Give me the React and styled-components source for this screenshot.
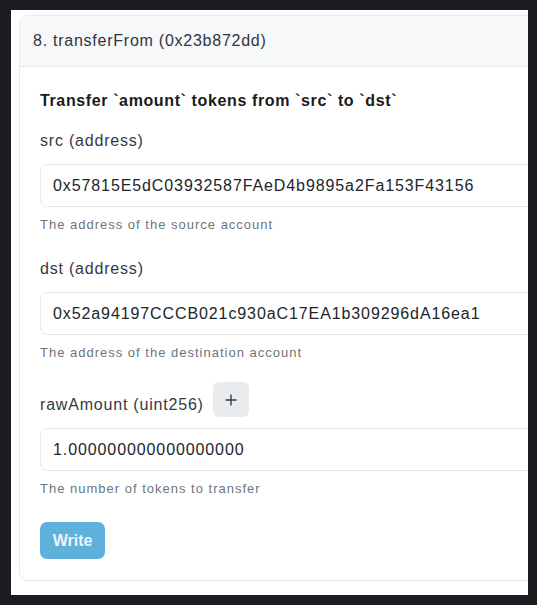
import React from 'react'
import styled, { createGlobalStyle } from 'styled-components'

const GlobalStyle = createGlobalStyle`
  html, body {
    margin: 0;
    padding: 0;
    background: #1b1c20;
  }
  body {
    font-family: "Liberation Sans", Arial, sans-serif;
  }
`

const Page = styled.div`
  width: 537px;
  height: 605px;
  padding: 10px 9px 10px 11px;
  box-sizing: border-box;
  background: #1b1c20;
`

const Panel = styled.div`
  height: 100%;
  background: #ffffff;
  overflow: hidden;
  padding: 5px 0 0 8px;
  box-sizing: border-box;
`

const Card = styled.div`
  width: 560px;
  border: 1px solid #e6e9ee;
  border-radius: 9px;
  overflow: hidden;
  background: #fff;
`

const Header = styled.div`
  height: 50px;
  display: flex;
  align-items: center;
  padding: 0 13px;
  background: #f7f8fa;
  border-bottom: 1px solid #e6e9ee;
  font-size: 16px;
  letter-spacing: 0.75px;
  color: #2f3640;
`

const Body = styled.div`
  padding: 22px 20px 21px 20px;
  display: flex;
  flex-direction: column;
  align-items: flex-start;
`

const Title = styled.div`
  font-size: 16px;
  line-height: 24px;
  font-weight: bold;
  letter-spacing: 0.62px;
  color: #1a1a1a;
  margin-bottom: 16px;
`

const LabelRow = styled.div`
  display: flex;
  align-items: flex-end;
  gap: 9px;
  margin-top: ${p => p.$top || 0}px;
`

const Label = styled.label`
  font-size: 16px;
  line-height: 24px;
  letter-spacing: 0.8px;
  color: #343a40;
`

const PlusButton = styled.button`
  width: 36px;
  height: 35px;
  border: none;
  border-radius: 6px;
  background: #e9ecef;
  display: flex;
  align-items: center;
  justify-content: center;
  padding: 0;
`

const Input = styled.input`
  width: 520px;
  height: 43px;
  box-sizing: border-box;
  margin-top: 11px;
  padding: 0 12px;
  border: 1px solid #e6e9ee;
  border-radius: 7px;
  font-family: "Liberation Sans", Arial, sans-serif;
  font-size: 16px;
  letter-spacing: 0.9px;
  color: #212529;
  background: #fff;
  outline: none;
`

const Help = styled.div`
  margin-top: 8px;
  font-size: 13px;
  line-height: 20px;
  letter-spacing: 1px;
  color: #6c757d;
`

const WriteButton = styled.button`
  margin-top: 23px;
  width: 65px;
  height: 37px;
  border: none;
  border-radius: 7px;
  background: #5fb0da;
  color: rgba(255, 255, 255, 0.9);
  font-family: "Liberation Sans", Arial, sans-serif;
  font-size: 16px;
  font-weight: bold;
  padding: 0;
`

const fields = [
  {
    name: 'src (address)',
    value: '0x57815E5dC03932587FAeD4b9895a2Fa153F43156',
    help: 'The address of the source account',
  },
  {
    name: 'dst (address)',
    value: '0x52a94197CCCB021c930aC17EA1b309296dA16ea1',
    help: 'The address of the destination account',
  },
  {
    name: 'rawAmount (uint256)',
    value: '1.000000000000000000',
    help: 'The number of tokens to transfer',
    plus: true,
  },
]

const PlusIcon = () => (
  <svg width="12" height="12" viewBox="0 0 12 12">
    <path d="M6 0.5v11M0.5 6h11" stroke="#343a40" strokeWidth="1.4" fill="none" />
  </svg>
)

const App = () => {
  return (
    <>
      <GlobalStyle />
      <Page>
        <Panel>
          <Card>
            <Header>8. transferFrom (0x23b872dd)</Header>
            <Body>
              <Title>Transfer `amount` tokens from `src` to `dst`</Title>
              {fields.map((f, i) => (
                <React.Fragment key={f.name}>
                  <LabelRow $top={i === 0 ? 0 : f.plus ? 19 : 22}>
                    <Label>{f.name}</Label>
                    {f.plus && (
                      <PlusButton>
                        <PlusIcon />
                      </PlusButton>
                    )}
                  </LabelRow>
                  <Input defaultValue={f.value} readOnly />
                  <Help>{f.help}</Help>
                </React.Fragment>
              ))}
              <WriteButton>Write</WriteButton>
            </Body>
          </Card>
        </Panel>
      </Page>
    </>
  )
}

export default App
